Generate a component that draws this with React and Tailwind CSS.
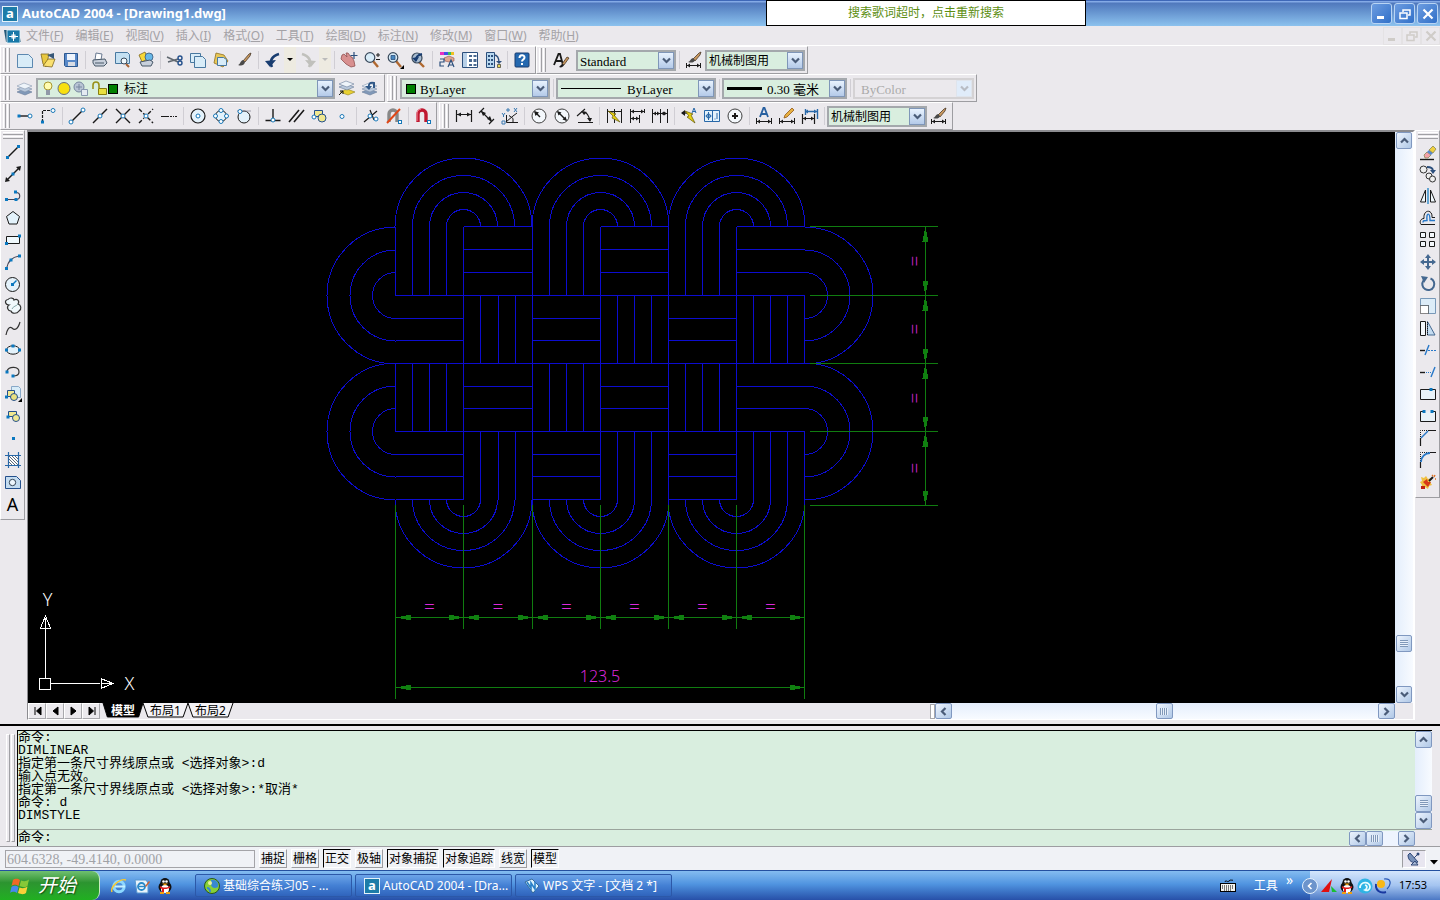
import clsx from 'clsx'

const INK = '#1a1a1a'
const NAVY = '#2c4f7c'
const DOT = '#0a78c0'
const PALE = '#c4e0f2'

const Node = ({ x, y }) => <circle cx={x} cy={y} r="2" fill="#fff" stroke="#1878b8" />
const Grip = ({ x, y }) => <rect x={x - 1.5} y={y - 1.5} width="3" height="3" fill={DOT} />
const Line = ({ d, c = INK, w = 1.4, ...rest }) => <path d={d} fill="none" stroke={c} strokeWidth={w} {...rest} />

const Magnet = () => (
    <>
        <Line d="M5 16V8a4 4 0 0 1 8 0v8" c="#c01830" w="3.4" />
        <Line d="M4 15V8a5 5 0 0 1 4-5" c="#f08898" w="1" />
        <rect x="14.5" y="14.5" width="3" height="3" fill="#fff" stroke="#1878b8" />
    </>
)

const Brush = () => (
    <>
        <path d="M9 11 15 4l2-1-1 3-5 6z" fill="#c89860" stroke="#3a2a1a" strokeWidth=".7" />
        <path d="M4 15c2 0 2-4 5-5l2 2c-1 4-4 4-7 3z" fill="#4a4a4a" />
    </>
)

const DimBrush = () => (
    <>
        <path d="M9 9 15 3l2-1-1 3-5 6z" fill="#c89860" stroke="#3a2a1a" strokeWidth=".7" />
        <path d="M4 12c2 0 2-3 5-4l2 2c-1 3-4 3-7 2z" fill="#4a4a4a" />
        <Line d="M2.5 13v5M16.5 13v5M3 15.500h13" w="1" />
        <path d="m3 15.5 3-2v4zM16 15.5l-3-2v4z" fill={INK} />
    </>
)

const Layers = () => (
    <>
        <path d="m2 14 7-3 8 3-7 3z" fill="#8098b8" stroke="#687c98" strokeWidth=".6" />
        <path d="m2 11 7-3 8 3-7 3z" fill="#b8c8dc" stroke="#8090a8" strokeWidth=".6" />
        <path d="m2 8 7-3 8 3-7 3z" fill="#eef4fa" stroke="#8898b0" strokeWidth=".6" />
    </>
)

const Lens = () => (
    <>
        <Line d="m11 11 5 6" c="#b06830" w="2.4" />
        <circle cx="8" cy="7.5" r="4.8" fill="#d8ecf8" stroke="#3a4a5c" strokeWidth="1.2" />
    </>
)

const ICONS = {
    new: <path d="M2.5 4.5h11l4 4v9h-15z" fill="#d8ecf8" stroke="#5c88b0" />,
    open: (
        <>
            <path d="M3 4h8l-3 13-3-3z" fill="#e8c840" stroke="#806820" strokeWidth=".8" />
            <path d="m5 16 5-7h7l-3 8z" fill="#fae070" stroke="#806820" strokeWidth=".8" />
            <path d="m9 5 7-2v6z" fill="#385878" />
        </>
    ),
    save: (
        <>
            <path d="M3.5 3.5h13v13h-12l-1-1z" fill="#5888c8" stroke="#2c5890" />
            <path d="M6 4h8v6H6z" fill="#eef4fc" />
            <path d="M7 12h7v4H7z" fill="#d8dce4" />
        </>
    ),
    print: (
        <>
            <path d="m6 3 6 1-1 6H5z" fill="#fff" stroke="#687890" />
            <path d="m3 10 12-1 2 4-3 3H5l-2-3z" fill="#c8d0dc" stroke="#485868" />
            <path d="M5 13h9" stroke="#485868" />
        </>
    ),
    preview: (
        <>
            <path d="M2.5 2.5h12l2 2v9h-14z" fill={PALE} stroke="#4878a0" />
            <Line d="m13 14 3 3" c="#a86030" w="2" />
            <circle cx="11" cy="11" r="3" fill="#f0f8fc" stroke="#3a4a5c" />
        </>
    ),
    publish: (
        <>
            <path d="m3 5 6-3 3 7-6 3z" fill="#f8d838" stroke="#806820" strokeWidth=".8" />
            <circle cx="13" cy="7" r="4" fill="#68b8e8" stroke="#385878" strokeWidth=".8" />
            <path d="m4 12 10-2 3 2-2 4H6z" fill="#c8d0dc" stroke="#485868" />
        </>
    ),
    cut: (
        <>
            <Line d="m2 7 11 5M3 12l10-3" c="#606870" w="1.6" />
            <circle cx="15" cy="8" r="2" fill="none" stroke="#24508c" strokeWidth="1.4" />
            <circle cx="15" cy="13" r="2" fill="none" stroke="#24508c" strokeWidth="1.4" />
        </>
    ),
    copy: (
        <>
            <path d="M2.5 3.5h10v9h-10z" fill="#d8ecf8" stroke="#4878a0" />
            <path d="M6.5 6.5h8l3 3v8h-11z" fill="#d8ecf8" stroke="#4878a0" />
        </>
    ),
    paste: (
        <>
            <path d="m5 3 8 2 4 6-5 6-9-4z" fill="#e8c858" stroke="#907020" strokeWidth=".8" />
            <path d="M6.5 7.5h6l3 2v6h-9z" fill="#d8ecf8" stroke="#4878a0" />
        </>
    ),
    match: <Brush />,
    undo: (
        <>
            <Line d="M9 17C6 11 9 6 16 4" c="#183c70" w="2.6" />
            <path d="m2 11 11-1-6 7z" fill="#183c70" />
        </>
    ),
    redo: (
        <>
            <Line d="M11 17C14 11 11 6 4 4" c="#c0c0bc" w="2.6" />
            <path d="m18 11-11-1 6 7z" fill="#c0c0bc" />
        </>
    ),
    pan: (
        <>
            <path d="m3 5 2-1 3 3-1-4 2 0 3 4 1 0 2 4 1 5-4 1-5-3-5-5z" fill="#d89090" stroke="#905050" strokeWidth=".8" />
            <Line d="M15 2v7M11.5 5.5h7" c={NAVY} w="1.2" />
        </>
    ),
    zoom: (
        <>
            <Lens />
            <Line d="M16 3v4M14 5h4M14 9.5h4" w="1" />
        </>
    ),
    zoomWindow: (
        <>
            <Lens />
            <path d="M6 5.500h4v4H6z" fill="#4888c0" stroke={NAVY} strokeWidth=".8" />
            <path d="M19 15v4h-4z" fill="#000" />
        </>
    ),
    zoomPrev: (
        <>
            <Line d="m10 11 6 6" c="#b06830" w="2.4" />
            <circle cx="9" cy="8" r="5" fill="#a8bcd0" stroke="#3a4a5c" strokeWidth="1.2" />
            <Line d="M8 11c-1-4 2-6 6-7" c="#183c70" w="2" />
            <path d="m4 8 7-1-3 5z" fill="#183c70" />
        </>
    ),
    props: (
        <>
            <path d="M3 2h4v3H3z" fill="#e830c0" />
            <path d="M7 2h4v3H7z" fill="#4050e8" />
            <path d="M11 2h3v3h-3z" fill="#30c060" />
            <path d="M14 2h3v3h-3z" fill="#f0c020" />
            <path d="m7 8 5-2 5 2v3l-5 1-4-1z" fill="#e0a890" stroke="#905050" strokeWidth=".6" />
            <Line d="M3 9h4v3H3v4h4M11 17l3-7 3 7M12 15h4" c={NAVY} w="1.2" />
        </>
    ),
    design: (
        <>
            <path d="M2.5 2.5h15v15h-15z" fill="#fff" stroke={NAVY} />
            <path d="M3 3h4v14H3z" fill="#b8d0e8" />
            <path d="M9 5h3v2H9zM13.5 5h3v2h-3zM9 9h3v3H9zM13.5 9h3v3h-3zM9 14h3v2H9zM13.5 14h3v2h-3z" fill="#4a6890" />
        </>
    ),
    palettes: (
        <>
            <path d="M3.5 2.5h8v15h-8z" fill="#b8d8f0" stroke={NAVY} />
            <path d="M5 5h2v2H5zM8 5h2v2H8zM5 9h2v2H5zM8 9h2v2H8zM5 13h2v2H5zM8 13h2v2H8z" fill={NAVY} />
            <Line d="M11 5c4 0 5 3 5 8" c={NAVY} />
            <path d="m13 11 6 0-3 3z" fill={NAVY} />
            <path d="M14.5 14.5h3v3h-3z" fill="#e8d858" stroke={INK} strokeWidth=".6" />
        </>
    ),
    help: (
        <>
            <rect x="3" y="3" width="14" height="14" rx="1" fill="#2468b0" stroke="#183c70" />
            <Line d="M7.5 8c0-3.500 5-3.500 5-.5 0 2-2.500 2-2.500 4M10 13v2" c="#fff" w="2" />
        </>
    ),
    textStyle: (
        <>
            <Line d="M3 15 7.5 4H9l3 11M5 11h6" w="1.8" />
            <path d="m11 14 5-7 2 1-5 7z" fill="#c89860" stroke="#3a2a1a" strokeWidth=".7" />
            <path d="m8 17 3-3 2 1c-1 2-3 3-5 2z" fill={INK} />
        </>
    ),
    dimStyle: <DimBrush />,
    layers: <Layers />,
    layerCurrent: (
        <>
            <path d="m3 14 7-3 8 3-7 3z" fill="#e8d030" stroke="#908020" strokeWidth=".6" />
            <path d="m2 9 7-3 8 3-7 3z" fill="#b8c8dc" stroke="#687c98" strokeWidth=".6" />
            <path d="m2 6 7-3 8 3-7 3z" fill="#eef4fa" stroke="#687c98" strokeWidth=".6" />
            <Line d="m2 17 4-4M3 13h3v3" w="1" />
        </>
    ),
    layerPrev: (
        <>
            <Layers />
            <Line d="M9 10c-1-4 1-6 5-5v5" c="#305888" w="2" />
            <path d="m5 8 7 0-3 4z" fill="#305888" />
        </>
    ),
    track: (
        <>
            <Line d="M4 10h9" />
            <Grip x={4} y={10} />
            <Node x={15} y={10} />
        </>
    ),
    snapFrom: (
        <>
            <Line d="M4.5 16V4.500H13" w="1.2" strokeDasharray="3 1" />
            <Grip x={4.5} y={16} />
            <Node x={15} y={4.5} />
        </>
    ),
    endpoint: (
        <>
            <Line d="M4 16 16 4" />
            <Node x={4} y={16} />
            <Node x={16} y={4} />
        </>
    ),
    midpoint: (
        <>
            <Line d="M3 17 17 3" />
            <Node x={10} y={10} />
        </>
    ),
    intersect: (
        <>
            <Line d="M3 3l14 14M3 17 17 3" />
            <Node x={10} y={10} />
        </>
    ),
    apparent: (
        <>
            <Line d="M3 3l14 14M3 17l5-5M12 8l5-5" strokeDasharray="4 2" />
            <Node x={10} y={10} />
        </>
    ),
    extension: <Line d="M2 10.5h8M11 10.5h2M14 10.5h1M16 10.5h2" w="1.2" />,
    center: (
        <>
            <circle cx="10" cy="10" r="7" fill="#e4f2fb" stroke={INK} strokeWidth="1.2" />
            <Node x={10} y={10} />
        </>
    ),
    quadrant: (
        <>
            <circle cx="10" cy="10" r="5.5" fill="#e4f2fb" stroke={INK} />
            <Node x={10} y={4.5} />
            <Node x={4.5} y={10} />
            <Node x={15.5} y={10} />
            <Node x={10} y={15.5} />
        </>
    ),
    tangent: (
        <>
            <circle cx="10" cy="11" r="6" fill="#e4f2fb" stroke={INK} />
            <Line d="M3 5h14" w=".8" c="#889" />
            <Node x={6} y={5.5} />
        </>
    ),
    perpendicular: (
        <>
            <Line d="M10 3v11M2.5 14.5h15" />
            <Node x={10} y={14} />
        </>
    ),
    parallel: <Line d="M3 16 13 4M8 16 18 4" w="1.6" />,
    insert: (
        <>
            <path d="M5.5 4.5h8v6h-8z" fill="#f0e890" stroke="#24508c" />
            <circle cx="13" cy="12" r="4" fill="#f0e890" stroke="#24508c" />
            <Node x={5} y={11} />
        </>
    ),
    node: <Node x={10} y={10.5} />,
    nearest: (
        <>
            <Line d="M3 16 16 5M9 4l4 10" w="1.2" />
            <Node x={9} y={10} />
            <Node x={15} y={13} />
        </>
    ),
    none: (
        <>
            <Line d="M5 16V8a4 4 0 0 1 8 0v8" c="#888" w="3.4" />
            <rect x="14.5" y="14.5" width="3" height="3" fill="#fff" stroke="#1878b8" />
            <Line d="M3 17 16 3" c="#e04818" w="2" />
        </>
    ),
    osnap: <Magnet />,
    dimLinear: (
        <>
            <Line d="M2.5 4v12M17.5 4v12M3 8.5h14" w="1.2" />
            <path d="m3 8.5 4-2v4zM17 8.5l-4-2v4z" fill={INK} />
        </>
    ),
    dimAligned: (
        <>
            <Line d="m2 7 5-5M12 18l5-5M4 5l10 10" w="1.2" />
            <path d="m4 5 5 2-3 3zM15 15l-5-2 3-3z" fill={INK} />
        </>
    ),
    dimOrdinate: (
        <>
            <Line d="M6.500 9v7.500H18M6 16l7-6M9 9.500l4 3v4M13 10l4-3" w="1" />
            <Line d="M7 3h2v2H7zM14 2l3 4M17 2l-3 4M2 7l1.500 2L5 7M3.500 9v2M2 15h3v3H2z" c="#3878b0" w="1" />
        </>
    ),
    dimRadius: (
        <>
            <circle cx="10" cy="10" r="7" fill="#f4f8fc" stroke="#404040" />
            <Line d="m6 6 5 5" />
            <path d="m5 5 5 1.500L6.500 10z" fill={INK} />
        </>
    ),
    dimDiameter: (
        <>
            <circle cx="10" cy="10" r="7" fill="#f4f8fc" stroke="#404040" />
            <Line d="m6 6 8 8" />
            <path d="m5 5 4.500 1.500-3 3zM15 15l-4.500-1.500 3-3z" fill={INK} />
        </>
    ),
    dimAngular: (
        <>
            <Line d="m2 10 8-7M3 16.500h15M8 6c4 0 6 4 7 9" w="1.1" />
            <path d="m6 5 6 1-3 3zM15 16l-3-4 5 0z" fill={INK} />
        </>
    ),
    dimQuick: (
        <>
            <Line d="M3.5 3v14M10.5 3v14M17.5 3v14M3 5.5h14" w="1" />
            <path d="m4 5 8 3-2 1 6 7-8-4 1-2z" fill="#e8d010" stroke="#605808" strokeWidth=".7" />
        </>
    ),
    dimBaseline: (
        <>
            <Line d="M3.5 3v14M17.5 3v4M12.5 9v8M3 5.5h14M3 12.5h10" w="1" />
            <path d="m4 5.5 3-2v4zM17 5.5l-3-2v4zM4 12.5l3-2v4zM12 12.5l-3-2v4z" fill={INK} />
        </>
    ),
    dimContinue: (
        <>
            <Line d="M2.5 3v14M10.5 3v14M17.5 3v14M3 7.5h14" w="1" />
            <path d="m3 7.5 3-2v4zM17 7.5l-3-2v4zM10 7.5l-3-2v4zM11 7.5l3-2v4z" fill={INK} />
        </>
    ),
    leader: (
        <>
            <Line d="M3 7h6" />
            <path d="m2 7 4-3v6z" fill={INK} />
            <path d="m6 5 8 3-2 1 4 8-8-6 2-1z" fill="#e8d010" stroke="#605808" strokeWidth=".7" />
            <Line d="m13 7 2-5 2 5M14 5.5h3" c="#2868a8" w="1" />
        </>
    ),
    tolerance: (
        <>
            <path d="M2.5 4.5h15v11h-15zM10.5 5v10" fill="#e4f2fb" stroke="#2868a8" />
            <circle cx="6.5" cy="10" r="2" fill="none" stroke="#2868a8" />
            <Line d="M6.5 6v8M3.5 10h6M12.500 13h1M15 7v6" c="#2868a8" w="1" />
        </>
    ),
    centerMark: (
        <>
            <circle cx="10" cy="10" r="7" fill="#f4f8fc" stroke="#404040" />
            <Line d="M10 7v6M7 10h6" w="2" />
        </>
    ),
    dimEdit: (
        <>
            <Line d="m6 11 3.500-9h1L14 11M7 8h6" c="#2860a0" w="1.8" />
            <Line d="M2.5 12v6M17.5 12v6M3 15.5h14" w="1" />
            <path d="m3 15.5 3-2v4zM17 15.5l-3-2v4z" fill={INK} />
        </>
    ),
    dimTextEdit: (
        <>
            <path d="m7 12 1-3 7-7 2 2-7 7z" fill="#e8b040" stroke="#905818" strokeWidth=".8" />
            <Line d="M2.5 12v6M17.5 12v6M3 15.5h14" w="1" />
            <path d="m3 15.5 3-2v4zM17 15.5l-3-2v4z" fill={INK} />
        </>
    ),
    dimUpdate: (
        <>
            <Line d="M5.5 3v6M17.5 3v10M5 5.5h13" c="#2868a8" />
            <path d="m5 5.5 3-2v4zM17 5.5l-3-2v4z" fill="#2868a8" />
            <Line d="M2.5 8v10M14.5 8v10M3 12.5h12" w="1.2" />
            <path d="m3 12.5 3-2v4zM14 12.5l-3-2v4z" fill={INK} />
        </>
    ),
    line: (
        <>
            <Line d="M5 15 15 5" />
            <Grip x={4.5} y={15.5} />
            <Grip x={15.5} y={4.5} />
        </>
    ),
    xline: (
        <>
            <Line d="M4 16 16 4" />
            <path d="m2 18 1-5 4 4zM18 2l-5 1 4 4z" fill={INK} />
            <Grip x={10} y={10} />
        </>
    ),
    pline: (
        <>
            <Line d="M4 13.5h9c5 0 5-7 0-7" w="1.1" c="#445" />
            <Grip x={3.5} y={13.5} />
            <Grip x={13} y={13.5} />
            <Grip x={12.5} y={6} />
        </>
    ),
    polygon: <path d="m10 3.500 6.500 5-2.500 7.500H6L3.500 8.500z" fill="#e4f2fb" stroke={INK} />,
    rect: (
        <>
            <path d="M3.5 6.5h13v7h-13z" fill="#f0f8fc" stroke={INK} />
            <Grip x={3.5} y={13.5} />
            <Grip x={16.5} y={6} />
        </>
    ),
    arc: (
        <>
            <Line d="M3.5 16.5C5 9 9 5 16 4" c="#445" w="1.2" />
            <Grip x={3.5} y={16.5} />
            <Grip x={8} y={8} />
            <Grip x={16.5} y={4} />
        </>
    ),
    circle: (
        <>
            <circle cx="9.5" cy="10.5" r="7" fill="#e4f2fb" stroke={INK} />
            <Line d="m9.5 10.5 4-4" c={DOT} />
            <Grip x={9.5} y={10.5} />
        </>
    ),
    cloud: (
        <>
            <path
                d="M6 9C2 9 1 4 5 3.500 7 1 11 2 11 4c3-2 6 1 4 4 3 1 4 5 1 7-2 3-7 3-8 0-3 0-5-4-2-6z"
                fill="#f0f8fc"
                stroke="#333"
                strokeWidth="1.2"
            />
            <Line d="M9 13c1-3 5-3 6-5" c="#8aa" w="1" />
        </>
    ),
    spline: <Line d="M3 17c1-5 3-9 6-7 3 3 6 1 8-6" c="#333" w="1.2" />,
    ellipse: (
        <>
            <ellipse cx="10" cy="10" rx="6.5" ry="4.2" fill="#e4f2fb" stroke={INK} />
            <Grip x={3.5} y={10} />
            <Grip x={16.5} y={10} />
            <Grip x={10} y={6} />
        </>
    ),
    ellipseArc: (
        <>
            <Line d="M4 9c2-5 12-5 12 1 0 3-3 4-6 4" c="#333" w="1.2" />
            <Grip x={4} y={10} />
            <Grip x={10} y={14} />
        </>
    ),
    insertBlock: (
        <>
            <path d="M8.5 2.5h7l2 2v9h-9z" fill="#d8ecf8" stroke="#88a8c8" />
            <path d="M4.5 6.5h7v6h-7z" fill="#f0e890" stroke="#24508c" />
            <circle cx="11" cy="13" r="3.5" fill="#e8e080" stroke="#24508c" />
            <Grip x={3.5} y={13} />
            <path d="M19 14v4h-4z" fill="#000" />
        </>
    ),
    makeBlock: (
        <>
            <path d="M5.5 5.5h8v5h-8z" fill="#f0e890" stroke="#24508c" />
            <circle cx="13" cy="12" r="3.5" fill="#f0e890" stroke="#24508c" />
            <Grip x={5} y={11} />
        </>
    ),
    point: <Grip x={10.5} y={10.5} />,
    hatch: (
        <>
            <path d="M5.5 5.5h10v10h-10z" fill="#fff" />
            <Line d="m6 6 9 9M6 9l6 6M6 12l3 3M9 6l6 6M12 6l3 3" c="#345" w=".8" />
            <Line d="M2 5.5h16M2 15.5h16M5.5 2v16M15.5 2v16" c="#2868a8" w="1.2" />
        </>
    ),
    region: (
        <>
            <path d="M2.5 4.5h11l4 4v8h-15z" fill="#c4dcf0" stroke="#24508c" />
            <circle cx="9.5" cy="10.5" r="3.2" fill="#eef6fc" stroke="#345" />
        </>
    ),
    erase: (
        <>
            <Line d="M2 17.5h14" />
            <path d="m6 13 3-3 4 3-3 3H7z" fill="#f4a0a8" stroke="#885" strokeWidth=".8" />
            <path d="m9 10 2-2 4 3-2 2z" fill="#5888d0" />
            <path d="m11 8 4-4 3 3-3 4z" fill="#f0d040" stroke="#885" strokeWidth=".8" />
        </>
    ),
    copyObj: (
        <>
            <circle cx="5.500" cy="5.5" r="3.500" fill="#eee" stroke="#333" />
            <circle cx="11" cy="12" r="3" fill="#eee" stroke="#333" />
            <circle cx="14.5" cy="15" r="3" fill="#eee" stroke="#333" />
            <Line d="M9 3c4 0 6 1 6 4" c={NAVY} w="1.8" />
            <path d="m12 6 6 0-3 4z" fill={NAVY} />
        </>
    ),
    mirror: (
        <>
            <path d="M7.5 4v12h-5zM12.5 4v12h5z" fill="#f0f8fc" stroke={INK} />
            <Line d="M10 2v16" c={DOT} w="1.2" />
        </>
    ),
    offset: (
        <>
            <path d="M3 16.5c-2-3 0-6 3-6C5 1 15 1 14 9.500h3" fill="none" stroke={INK} />
            <path d="M5 14.500c0-2 1-2 4-2C8 4 12 4 12 12.500h5" fill="none" stroke="#2878c8" strokeWidth="1.4" />
            <path d="M3 16.5h14" stroke={INK} />
        </>
    ),
    array: <path d="M2.5 2.5h5v5h-5zM11.5 2.5h5v5h-5zM2.5 11.5h5v5h-5zM11.5 11.5h5v5h-5z" fill="#f4f8fc" stroke={INK} />,
    move: (
        <>
            <Line d="M10 4v12M4 10h12" c="#456890" w="2" />
            <path d="m10 2 3 4H7zM10 18l3-4H7zM2 10l4-3v6zM18 10l-4-3v6z" fill="#456890" />
        </>
    ),
    rotate: (
        <>
            <Line d="M5.5 6.5a6 6 0 1 0 7-2" c="#456890" w="2" />
            <path d="m3 2 7 1-4 6z" fill="#456890" />
        </>
    ),
    scale: (
        <>
            <path d="M2.5 2.5h15v15h-7v-8h-8z" fill="#dcecf8" stroke="#7898b8" />
            <path d="M2.5 9.5h8v8h-8z" fill="#fff" stroke={INK} strokeDasharray="1 1" />
        </>
    ),
    stretch: (
        <>
            <path d="M9.500 3.500 17 17H9.500z" fill="#c4dcf0" stroke="#456890" />
            <path d="M2.5 3.5h5v14h-5z" fill="#f4f8fc" stroke={INK} />
            <Line d="M9.5 4v13" strokeDasharray="1 1" w="1" />
        </>
    ),
    trim: (
        <>
            <Line d="M7 15l4-10" c="#2878c8" />
            <Line d="M2 10.5h5" />
            <Line d="M10 10.5h8" w="1" strokeDasharray="2 1" c="#2878c8" />
        </>
    ),
    extend: (
        <>
            <Line d="M2 10.5h5" />
            <Line d="M8 10.5h5" w="1" strokeDasharray="1 1" c="#2878c8" />
            <Line d="m13 15 4-10" c="#2878c8" />
        </>
    ),
    breakPoint: (
        <>
            <path d="M2.5 5.5h15v10h-15z" fill="#e8f2f8" stroke={INK} />
            <Grip x={13} y={5.5} />
        </>
    ),
    breakTwo: (
        <>
            <path d="M6 5.5H2.500v10h15v-10H14" fill="#e8f2f8" stroke={INK} />
            <Grip x={6} y={5.5} />
            <Grip x={14} y={5.5} />
        </>
    ),
    chamfer: (
        <>
            <Line d="M2.5 11V2.500H11" strokeDasharray="1 1" w="1" />
            <Line d="m3 10 7-7" c="#2878c8" />
            <Line d="M2.5 10v8M10 2.5h8" w="1.2" />
        </>
    ),
    fillet: (
        <>
            <Line d="M2.5 11V2.500H11" strokeDasharray="1 1" w="1" />
            <Line d="M3 12c0-5 4-9 9-9" c="#2878c8" w="1.8" />
            <Line d="M2.5 12v6M12 2.5h6" w="1.2" />
        </>
    ),
    explode: (
        <>
            <path d="m3 5 3 1 2-2 2 3 4-1-2 4 2 3-3 1-1 3-3-2-4 2 1-4-2-3 2-1z" fill="#f0c040" />
            <path d="m5 10 4-3 1 3 3 0-3 5z" fill="#d83818" />
            <path d="M3 14h4v3H3z" fill="#c02010" />
            <Line d="m11 9 4-4" w="2" />
            <Line d="m14 3 1 1M17 3l-1 2M17 7h1" c="#e07020" />
        </>
    ),
}

function Icon({ name }) {
    if (name === 'mtext') return <span className="text-[18px] leading-[22px]">A</span>
    return (
        <svg viewBox="0 0 20 20" className="h-5 w-5 shrink-0" aria-hidden="true">
            {ICONS[name]}
        </svg>
    )
}

const Tool = ({ name, className }) => (
    <button className={clsx('flex shrink-0 items-center justify-center', className ?? 'w-[23px]')} aria-label={name}>
        <Icon name={name} />
    </button>
)

// "|" in a list of tools stands for a separator, "v" for a flyout arrow ("V" when disabled)
const Tools = ({ names }) =>
    names.split(' ').map((n, i) => {
        if (n === '|') return <Sep key={i} />
        if (n === 'v' || n === 'V')
            return (
                <button key={i} className="flex w-3 items-center justify-center bg-[#f0ecd8]/60" aria-label="more">
                    <svg viewBox="0 0 6 4" className="h-1 w-1.5">
                        <path d="M0 0h6L3 3z" fill={n === 'v' ? '#000' : '#bbb'} />
                    </svg>
                </button>
            )
        return <Tool key={i} name={n} />
    })

const Sep = () => (
    <span className="flex w-1.5 shrink-0 justify-center py-1">
        <i className="border-l border-[#d0ced4]" />
    </span>
)

function Bar({ children }) {
    return (
        <div className="flex h-7 items-stretch border border-t-white border-r-[#9d9da1] border-b-[#9d9da1] border-l-white pr-[2px]">
            <div className="flex w-3 shrink-0 gap-px py-px pl-[2px]">
                <i className="w-[3px] border-r border-l border-r-[#a0a0a4] border-l-white" />
                <i className="w-[3px] border-r border-l border-r-[#a0a0a4] border-l-white" />
            </div>
            {children}
        </div>
    )
}

const Chevron = ({ dir = 'down', faded }) => {
    const turn = { down: 'rotate-0', up: 'rotate-180', left: 'rotate-90', right: '-rotate-90' }[dir]
    return (
        <svg viewBox="0 0 9 9" className={clsx('h-[9px] w-[9px]', turn)}>
            <path d="m1 2.500 3.500 3.500L8 2.500" fill="none" stroke={faded ? '#b8bcc4' : '#4a5c78'} strokeWidth="2.2" />
        </svg>
    )
}

function Combo({ label, value, width, children, faded, serif }) {
    return (
        <div
            className={clsx(
                'my-[3px] flex h-[21px] shrink-0 items-center border-2',
                width,
                faded ? 'border-[#d4d2d4] bg-[#ebe9ed]' : 'border-[#a4a8ac] bg-[#d9eedf]',
            )}
        >
            {children}
            <select
                aria-label={label}
                disabled={faded}
                className={clsx(
                    'h-full min-w-0 flex-1 appearance-none outline-none',
                    serif ? "font-['Liberation_Serif','Noto_Sans_CJK_SC',serif] text-[13px]" : 'text-xs',
                    faded ? 'pl-1.5 text-[#aaa]' : 'pl-[2px] text-black',
                )}
            >
                <option>{value}</option>
            </select>
            <span
                className={clsx(
                    'pointer-events-none flex h-[17px] w-4 shrink-0 items-center justify-center border',
                    faded ? 'border-[#dfe4ec] bg-[#e0ecfa]' : 'border-[#7f96b8] bg-linear-to-b from-[#e8f2fe] to-[#b4cae8]',
                )}
            >
                <Chevron faded={faded} />
            </span>
        </div>
    )
}

const ScrollButton = ({ dir, className }) => (
    <button
        aria-label={dir}
        className={clsx(
            'flex shrink-0 items-center justify-center rounded-[2px] border border-[#8098c0] bg-linear-to-br from-[#edf4fe] to-[#b0c8e6]',
            className,
        )}
    >
        {dir === 'thumb-y' && <i className="h-[7px] w-2 bg-[repeating-linear-gradient(#8098b8_0_1px,#e8f0fa_1px_2px)]" />}
        {dir === 'thumb-x' && <i className="h-[7px] w-2 bg-[repeating-linear-gradient(90deg,#8098b8_0_1px,#e8f0fa_1px_2px)]" />}
        {!dir.startsWith('thumb') && <Chevron dir={dir} />}
    </button>
)

const AppLogo = () => (
    <span className="flex h-4 w-4 shrink-0 items-center justify-center border border-[#e4f2fa] bg-[#1c7ca8] pb-[2px] text-[13px] leading-[14px] font-bold text-white">
        a
    </span>
)

const WinGlyph = ({ kind }) => (
    <svg viewBox="0 0 12 12" className="h-3 w-3" fill="none" stroke="currentColor">
        {kind === 'minimize' && <path d="M1 9.5h7" strokeWidth="3" />}
        {kind === 'restore' && (
            <>
                <path d="M4 4V2h7v5H9" strokeWidth="1.5" />
                <path d="M1 5h7v5.500H1z" strokeWidth="1.5" />
            </>
        )}
        {kind === 'close' && <path d="m1.500 1.500 9 9M10.500 1.500l-9 9" strokeWidth="2.2" />}
    </svg>
)

const WINDOW_KEYS = ['minimize', 'restore', 'close']

function TitleBar() {
    return (
        <header className="relative flex h-[26px] shrink-0 items-center border-t border-[#3f68b8] bg-linear-to-b from-[#84aae6] from-4% via-[#5078bc] via-8% to-[#8cc2ee] px-0.5">
            <AppLogo />
            <h1 className="flex-1 pl-1 text-[13px] font-bold text-white">AutoCAD 2004 - [Drawing1.dwg]</h1>
            <div className="flex gap-[2px]">
                {WINDOW_KEYS.map((k) => (
                    <button
                        key={k}
                        aria-label={k}
                        className="flex h-[21px] w-[21px] items-center justify-center rounded-[3px] border border-[#b8d4f4] bg-linear-to-br from-[#6c9ce0] to-[#3070c8] text-white"
                    >
                        <WinGlyph kind={k} />
                    </button>
                ))}
            </div>
            <button className="absolute -top-px right-[354px] h-[26px] w-80 border border-black bg-white text-center text-xs text-[#5c8e10]">
                搜索歌词超时，点击重新搜索
            </button>
        </header>
    )
}

const MENUS = [
    ['文件', 'F'],
    ['编辑', 'E'],
    ['视图', 'V'],
    ['插入', 'I'],
    ['格式', 'O'],
    ['工具', 'T'],
    ['绘图', 'D'],
    ['标注', 'N'],
    ['修改', 'M'],
    ['窗口', 'W'],
    ['帮助', 'H'],
]

function MenuBar() {
    return (
        <nav className="flex h-5 shrink-0 items-center border-b border-white pl-1 text-xs text-[#a4a2a6]">
            <svg viewBox="0 0 18 16" className="mr-1 h-4 w-[18px]" aria-hidden="true">
                <path d="M0 2h14l3 12H2z" fill="#245878" />
                <rect x="3" y="2" width="13" height="13" fill="#1878a8" stroke="#e8f4fa" strokeWidth=".8" />
                <path d="M9.500 4v9M5 8.500h9" stroke="#fff" />
                <rect x="8" y="7" width="3" height="3" fill="none" stroke="#fff" />
            </svg>
            <div className="flex gap-3">
                {MENUS.map(([name, key]) => (
                    <button key={key} className="leading-4 whitespace-nowrap">
                        {name}(<u>{key}</u>)
                    </button>
                ))}
            </div>
            <div className="ml-auto flex">
                {WINDOW_KEYS.map((k) => (
                    <button
                        key={k}
                        aria-label={k}
                        className="flex h-[18px] w-[19px] items-center justify-center border border-[#e4e2e4] text-[#cfccc8]"
                    >
                        <WinGlyph kind={k} />
                    </button>
                ))}
            </div>
        </nav>
    )
}

const Swatch = () => <i className="h-[10px] w-[10px] shrink-0 border border-black bg-[#008000]" />

function LayerFlags() {
    return (
        <svg viewBox="0 0 66 17" className="ml-1 h-[17px] w-[66px] shrink-0" aria-hidden="true">
            <circle cx="6" cy="6" r="4" fill="#fffcb0" stroke="#a89830" />
            <path d="M4 10h4v5H4z" fill="#9098a8" />
            <circle cx="22" cy="8.5" r="6" fill="#f8e010" stroke="#687080" />
            <circle cx="37" cy="7" r="5" fill="#b8c4d4" stroke="#7888a0" />
            <path d="M34 7h6M37 4v6" stroke="#7888a0" />
            <path d="M39.5 9.5h6v6h-6z" fill="#e4eaf2" stroke="#8898b0" />
            <path d="M51 9V5c0-4 6-4 6 0v3" fill="none" stroke="#989018" strokeWidth="1.6" />
            <path d="M56.5 8.5h8v6h-8z" fill="#e8e040" stroke="#888010" />
        </svg>
    )
}

function Toolbars() {
    return (
        <div className="shrink-0">
            <div className="flex">
                <Bar>
                    <Tools names="new open save | print preview publish | cut copy paste match | undo v redo V | pan zoom zoomWindow zoomPrev | props design palettes | help" />
                </Bar>
                <Bar>
                    <Tool name="textStyle" />
                    <span className="w-1" />
                    <Combo label="文字样式" value="Standard" width="w-[100px]" serif />
                    <Sep />
                    <Tool name="dimStyle" />
                    <Combo label="标注样式" value="机械制图用" width="w-[100px]" />
                </Bar>
            </div>
            <div className="flex gap-[2px]">
                <Bar>
                    <Tool name="layers" />
                    <Combo label="图层" value="标注" width="w-[299px]">
                        <LayerFlags />
                        <Swatch />
                        <i className="w-1" />
                    </Combo>
                    <Tools names="layerCurrent layerPrev" />
                    <i className="w-px" />
                </Bar>
                <Bar>
                    <Combo label="颜色" value="ByLayer" width="w-[150px]" serif>
                        <i className="w-1" />
                        <Swatch />
                        <i className="w-0.5" />
                    </Combo>
                    <Sep />
                    <Combo label="线型" value="ByLayer" width="w-[160px]" serif>
                        <i className="mr-1 ml-[3px] w-[60px] shrink-0 border-t border-black" />
                    </Combo>
                    <Sep />
                    <Combo label="线宽" value="0.30 毫米" width="w-[125px]" serif>
                        <i className="mx-[3px] w-[35px] shrink-0 border-t-3 border-black" />
                    </Combo>
                    <Sep />
                    <Combo label="打印样式" value="ByColor" width="w-[121px]" serif faded />
                </Bar>
            </div>
            <div className="flex gap-[2px]">
                <Bar>
                    <Tools names="track snapFrom | endpoint midpoint intersect apparent extension | center quadrant tangent | perpendicular parallel insert node | nearest none | osnap" />
                </Bar>
                <Bar>
                    <Tools names="dimLinear dimAligned dimOrdinate | dimRadius dimDiameter dimAngular | dimQuick dimBaseline dimContinue | leader tolerance centerMark | dimEdit dimTextEdit dimUpdate |" />
                    <Combo label="当前标注样式" value="机械制图用" width="w-[100px]" />
                    <Tool name="dimStyle" />
                </Bar>
            </div>
        </div>
    )
}

function SideBar({ names }) {
    return (
        <div className="w-[25px] shrink-0">
            <div className="flex flex-col items-center border border-t-white border-r-[#9d9da1] border-b-[#9d9da1] border-l-white pb-1">
                <div className="flex w-5 flex-col gap-px pt-px pb-[2px]">
                    <i className="h-[3px] border-t border-b border-t-white border-b-[#a0a0a4]" />
                    <i className="h-[3px] border-t border-b border-t-white border-b-[#a0a0a4]" />
                </div>
                {names.split(' ').map((n) => (
                    <Tool key={n} name={n} className="h-[22px] w-[22px]" />
                ))}
            </div>
        </div>
    )
}

const XS = [395.5, 463.5, 532.5, 600.5, 668.5, 736.5, 804.5]
const YS = [226.5, 295.5, 363.5, 431.5, 499.5]
const R4 = [17, 34, 51, 68.5]
const R3 = [23, 45.5, 68.5]

// Woven knot: even cells carry the vertical strand on top, odd cells the horizontal one
function knotPath() {
    let d = ''
    for (let r = 0; r < 4; r++) {
        for (let c = 0; c < 6; c++) {
            const [x0, x1, y0, y1] = [XS[c], XS[c + 1], YS[r], YS[r + 1]]
            if ((r + c) % 2 === 0) {
                for (let k = 0; k <= 4; k++) d += `M${x0 + Math.round(((x1 - x0) * k) / 4)} ${y0}V${y1}`
            } else {
                for (let k = 0; k <= 3; k++) d += `M${x0} ${y0 + Math.round(((y1 - y0) * k) / 3)}H${x1}`
            }
        }
    }
    for (const x of [XS[1], XS[3], XS[5]]) {
        for (const r of R4) {
            d += `M${x - r} ${YS[0]}a${r} ${r} 0 0 1 ${2 * r} 0`
            d += `M${x - r} ${YS[4]}a${r} ${r} 0 0 0 ${2 * r} 0`
        }
    }
    for (const y of [YS[1], YS[3]]) {
        for (const r of R3) {
            d += `M${XS[0]} ${y - r}a${r} ${r} 0 0 0 0 ${2 * r}`
            d += `M${XS[6]} ${y - r}a${r} ${r} 0 0 1 0 ${2 * r}`
        }
    }
    // edges shared by the rows, drawn through both kinds of cell
    for (const y of YS.slice(1, 4)) d += `M${XS[0]} ${y}H${XS[6]}`
    return d
}

const DIM_YS = [226.5, 295.5, 363.5, 431.5, 505.5]

function Dimensions() {
    const ends = XS.slice(1).map((x, i) => [XS[i], x])
    const rows = DIM_YS.slice(1).map((y, i) => [DIM_YS[i], y])
    const hArrows = (x0, x1, y) => `M${x0} ${y}l15-3v6zM${x1} ${y}l-15-3v6z`
    return (
        <g shapeRendering="crispEdges" className="font-['Noto_Sans',sans-serif]">
            <g stroke="#107c10">
                {XS.map((x, i) => (
                    <path key={x} d={`M${x} 505V${i === 0 || i === 6 ? 699 : 629}`} />
                ))}
                <path d="M395 617.5H804M395 687.5H804M925.5 226V506" />
                {DIM_YS.map((y) => (
                    <path key={y} d={`M810 ${y}H938`} />
                ))}
            </g>
            <g fill="#108010">
                {ends.map(([a, b]) => (
                    <path key={a} d={hArrows(a, b, 617.5)} />
                ))}
                <path d={hArrows(XS[0], XS[6], 687.5)} />
                {rows.map(([a, b]) => (
                    <path key={a} d={`M925.5 ${a}l-3 15h6zM925.5 ${b}l-3-15h6z`} />
                ))}
            </g>
            <g className="fill-[#dc28dc]" textAnchor="middle">
                {ends.map(([a, b]) => (
                    <text key={a} x={(a + b) / 2} y="613" className="text-[19px] font-light">
                        =
                    </text>
                ))}
                {[261, 329, 398, 468].map((y) => (
                    <text key={y} transform={`translate(921 ${y}) rotate(-90)`} className="text-[19px] font-light">
                        =
                    </text>
                ))}
                <text x="600" y="682" className="text-base font-light">
                    123.5
                </text>
            </g>
        </g>
    )
}

function Canvas() {
    return (
        <div className="relative min-w-0 flex-1 overflow-hidden bg-black">
            <svg className="absolute inset-0 h-full w-full" role="img" aria-label="Drawing1.dwg">
                <g transform="translate(-28 -132)">
                    <path d={knotPath()} fill="none" stroke="#0c0cd0" shapeRendering="crispEdges" />
                    <Dimensions />
                    <g fill="none" stroke="#fff" shapeRendering="crispEdges">
                        <path d="M39.5 678.5h11v11h-11zM45.5 678V628M50 683.5h50" />
                        <path d="M45.5 616l-5 12h10zM45.5 618v10M113 683.5l-12-5v10zM101 683.5h11" />
                    </g>
                    <g className="fill-white font-['Noto_Sans',sans-serif] text-[18px] font-light" textAnchor="middle">
                        <text x="47.5" y="606">
                            Y
                        </text>
                        <text x="129.5" y="690">
                            X
                        </text>
                    </g>
                </g>
            </svg>
        </div>
    )
}

function SheetTabs() {
    const nav = ['M3 1v8M9 1v8L4.500 5z', 'M8 1v8L3 5z', 'M3 1v8l5-4z', 'M9 1v8M3 1v8l4.500-4z']
    return (
        <div className="flex shrink-0">
            {nav.map((d) => (
                <button key={d} aria-label="tab" className="flex h-4 w-[18px] items-center justify-center border border-white border-r-[#a8a8ac] border-b-[#a8a8ac]">
                    <svg viewBox="0 0 11 10" className="h-[10px] w-[11px]">
                        <path d={d} stroke="#000" />
                    </svg>
                </button>
            ))}
            <div className="flex pl-[3px] text-xs">
                {['模型', '布局1', '布局2'].map((t, i) => (
                    <button key={t} className={clsx('relative h-4 leading-[14px]', i === 0 ? 'w-10 font-bold text-white' : 'w-[45px]')}>
                        <svg viewBox="0 0 46 16" preserveAspectRatio="none" className="absolute inset-0 h-full w-full overflow-visible">
                            <path d="M0 0l5 14H41L46 0" fill={i === 0 ? '#000' : '#f4f3f6'} stroke="#000" />
                        </svg>
                        <span className="relative">{t}</span>
                    </button>
                ))}
            </div>
        </div>
    )
}

function Workspace() {
    return (
        <main className="flex min-h-0 flex-1">
            <SideBar names="line xline pline polygon rect arc circle cloud spline ellipse ellipseArc insertBlock makeBlock point hatch region mtext" />
            <section className="ml-[2px] flex min-w-0 flex-1 flex-col border-t-2 border-r-2 border-b border-l border-t-[#8c8c90] border-r-white border-b-white border-l-[#8c8c90]">
                <div className="flex min-h-0 flex-1">
                    <Canvas />
                    <div className="flex w-[18px] shrink-0 flex-col bg-linear-to-r from-[#e4eefc] to-[#f8fbff] px-px">
                        <ScrollButton dir="up" className="h-[17px]" />
                        <i className="grow-[485]" />
                        <ScrollButton dir="thumb-y" className="h-[17px]" />
                        <i className="grow-[34]" />
                        <ScrollButton dir="down" className="h-[17px]" />
                    </div>
                </div>
                <div className="flex justify-between pr-[18px]">
                    <SheetTabs />
                    <div className="flex w-[34%] bg-linear-to-b from-[#e4eefc] to-[#f8fbff]">
                        <i className="mt-px w-[5px] border border-[#a8a8ac] bg-white" />
                        <ScrollButton dir="left" className="h-4 w-[17px]" />
                        <i className="grow-[203]" />
                        <ScrollButton dir="thumb-x" className="h-4 w-[17px]" />
                        <i className="grow-[205]" />
                        <ScrollButton dir="right" className="h-4 w-[17px]" />
                    </div>
                </div>
            </section>
            <SideBar names="erase copyObj mirror offset array move rotate scale stretch trim extend breakPoint breakTwo chamfer fillet explode" />
        </main>
    )
}

const HISTORY = [
    '命令:',
    'DIMLINEAR',
    '指定第一条尺寸界线原点或 <选择对象>:d',
    '输入点无效。',
    '指定第一条尺寸界线原点或 <选择对象>:*取消*',
    '命令: d',
    'DIMSTYLE',
]

function CommandWindow() {
    return (
        <section className="mt-1 flex shrink-0 border-t-2 border-black bg-[#ebe9ed] pt-1">
            <div className="flex w-[17px] shrink-0 gap-px py-1 pl-1.5">
                <i className="w-1 border border-[#a0a0a4] border-t-white border-l-white" />
                <i className="w-1 border border-[#a0a0a4] border-t-white border-l-white" />
            </div>
            <div className="mr-2 min-w-0 flex-1 border-t border-l border-black bg-[#d9eedf] font-['Liberation_Mono','Noto_Sans_CJK_SC',monospace] text-[13px]">
                <div className="flex border-b border-[#9aa49c]">
                    <div className="flex-1 pb-[7px]">
                        {HISTORY.map((line, i) => (
                            <p key={i} className="h-[13px] leading-[13px]">
                                {line}
                            </p>
                        ))}
                    </div>
                    <div className="flex w-[17px] flex-col bg-linear-to-r from-[#e4eefc] to-[#f8fbff]">
                        <ScrollButton dir="up" className="h-[17px]" />
                        <i className="flex-1" />
                        <ScrollButton dir="thumb-y" className="h-[17px]" />
                        <ScrollButton dir="down" className="h-[17px]" />
                    </div>
                </div>
                <div className="flex h-4 items-center">
                    <label htmlFor="cmd" className="leading-4">
                        命令:
                    </label>
                    <input id="cmd" className="h-4 min-w-0 flex-1 px-1 outline-none" />
                    <div className="flex w-[66px] bg-[#eef4fe]">
                        <ScrollButton dir="left" className="h-[15px] w-[17px]" />
                        <ScrollButton dir="thumb-x" className="h-[15px] w-[17px]" />
                        <i className="flex-1" />
                        <ScrollButton dir="right" className="h-[15px] w-[17px]" />
                    </div>
                    <i className="h-4 w-[17px] bg-[#ebe9ed]" />
                </div>
            </div>
        </section>
    )
}

const MODES = [
    ['捕捉', false],
    ['栅格', false],
    ['正交', true],
    ['极轴', false],
    ['对象捕捉', true],
    ['对象追踪', true],
    ['线宽', false],
    ['模型', true],
]

function StatusBar() {
    return (
        <footer className="flex h-6 shrink-0 items-center gap-1 border-t border-[#9d9da1] bg-[#f0f2f6] pl-[5px] text-xs">
            <output className="h-[18px] w-[250px] border border-[#a4a4a8] pl-px font-['Liberation_Serif',serif] text-sm leading-[17px] text-[#a0a2a6]">
                604.6328, -49.4140, 0.0000
            </output>
            {MODES.map(([name, on]) => (
                <button
                    key={name}
                    aria-pressed={on}
                    className={clsx(
                        'h-[19px] border px-px leading-4',
                        on ? 'border-t-black border-r-white border-b-white border-l-black' : 'border-t-white border-r-[#9d9da1] border-b-[#9d9da1] border-l-white',
                    )}
                >
                    {name}
                </button>
            ))}
            <button aria-label="通信中心" className="ml-auto flex h-[18px] w-6 items-center justify-center border border-t-[#9d9da1] border-r-white border-b-white border-l-[#9d9da1] bg-[#e8e6f0]">
                <svg viewBox="0 0 16 16" className="h-4 w-4">
                    <path d="M2 4c0 6 5 9 10 7L4 2z" fill="#7890b8" stroke="#304878" />
                    <path d="m8 7 4-4M5 14h7l-3-4z" stroke="#304878" fill="#a8b8d4" />
                    <circle cx="12" cy="3" r="1.5" fill="#304878" />
                </svg>
            </button>
            <svg viewBox="0 0 8 5" className="mt-2 mr-[2px] h-[5px] w-2">
                <path d="M0 0h8L4 4.500z" />
            </svg>
        </footer>
    )
}

const Penguin = () => (
    <svg viewBox="0 0 16 16" className="h-4 w-4">
        <ellipse cx="8" cy="9" rx="6.5" ry="6" fill="#111" />
        <ellipse cx="8" cy="4.5" rx="4.5" ry="4.5" fill="#111" />
        <ellipse cx="8" cy="11" rx="4" ry="4" fill="#fff" />
        <circle cx="6.5" cy="3.5" r="1.3" fill="#fff" />
        <circle cx="9.5" cy="3.5" r="1.3" fill="#fff" />
        <path d="M5 5.500h6L8 7.500z" fill="#f0a010" />
        <path d="M3 8c3 2 7 2 10 0v2c-3 1-5 1-6 1v3H5v-3l-2-1z" fill="#e01818" />
        <path d="M3 14h4v2H3zM9 14h4v2H9z" fill="#f0a010" />
    </svg>
)

const Task = ({ icon, children }) => (
    <button className="flex h-[23px] w-[157px] items-center gap-[3px] rounded-[2px] border border-[#2c58a8] bg-linear-to-b from-[#6ca4e8] via-[#4480d4] to-[#3064bc] pl-2 text-left text-xs whitespace-nowrap text-white">
        {icon}
        {children}
    </button>
)

function TaskBar() {
    return (
        <div className="flex h-[30px] shrink-0 items-center border-t border-[#2450a0] bg-linear-to-b from-[#84bcf0] via-[#5094e0] via-45% to-[#2850a8] text-white">
            <button className="flex h-full w-[100px] items-center gap-2 rounded-r-lg border-r border-[#c8ecc0] bg-linear-to-b from-[#70c070] via-[#2c9430] via-40% to-[#20b020] pl-2.5 text-[19px] italic">
                <svg viewBox="0 0 20 18" className="h-[18px] w-5" aria-hidden="true">
                    <path d="M3 3c3-2 5-1 7 0L8.500 9c-2-1-4-2-7 0z" fill="#f06828" />
                    <path d="M11 3.500c3 1 5 1 8-1L17.500 9c-3 2-5 1-8 0z" fill="#88c838" />
                    <path d="M1.500 10c3-2 5-1 7 0L7 16c-2-1-4-2-7 0z" fill="#4888f0" />
                    <path d="M9.500 10.500c3 1 5 1 8-1L16 16c-3 2-5 1-8 0z" fill="#f8d038" />
                </svg>
                <span className="[text-shadow:1px_1px_1px_#145014]">开始</span>
            </button>
            <div className="flex w-[95px] items-center gap-[7px] pl-[11px]">
                <svg viewBox="0 0 16 16" className="h-4 w-4">
                    <circle cx="8" cy="8.5" r="5.2" fill="none" stroke="#8cd8ff" strokeWidth="3" />
                    <path d="M4 8.500h10" stroke="#c8f0ff" strokeWidth="2" />
                    <path d="M1 14C-1 9 9 0 15 2" fill="none" stroke="#f8c830" strokeWidth="1.4" />
                </svg>
                <svg viewBox="0 0 16 16" className="h-4 w-4">
                    <path d="M1 2h11l2 3v10H3z" fill="#e8f4fc" stroke="#5898d0" />
                    <circle cx="7.500" cy="8.5" r="3.500" fill="none" stroke="#2888c8" strokeWidth="1.8" />
                    <path d="M5 8.500h6" stroke="#2888c8" strokeWidth="1.4" />
                    <path d="m11 8 4-5 1 1-4 5z" fill="#d06030" />
                </svg>
                <Penguin />
            </div>
            <div className="flex gap-[3px]">
                <Task
                    icon={
                        <svg viewBox="0 0 16 16" className="h-4 w-4 shrink-0">
                            <circle cx="8" cy="8" r="7.5" fill="#88d038" stroke="#285818" />
                            <path d="M7 2c5-1 8 2 7 7-3 2-7 1-7-3z" fill="#3888d0" />
                            <path d="M3 10c2 0 3 2 3 4" fill="none" stroke="#3888d0" strokeWidth="2" />
                            <circle cx="6" cy="5" r="2" fill="#e8f0a0" />
                        </svg>
                    }
                >
                    基础综合练习05 - ...
                </Task>
                <Task icon={<AppLogo />}>AutoCAD 2004 - [Dra...</Task>
                <Task
                    icon={
                        <svg viewBox="0 0 16 16" className="h-4 w-4 shrink-0">
                            <path d="m1 4 7-3 7 7-6 7z" fill="#d8f0fc" stroke="#205888" strokeWidth=".8" />
                            <path d="m3 4 4 6V5l4 6V4" fill="none" stroke="#2880c8" strokeWidth="1.6" />
                        </svg>
                    }
                >
                    WPS 文字 - [文档 2 *]
                </Task>
            </div>
            <svg viewBox="0 0 16 13" className="ml-auto h-[13px] w-4">
                <path d="M5 3c1-3 2 1 4-1s3 0 4-1" fill="none" stroke="#000" />
                <rect x=".5" y="4.5" width="15" height="8" fill="#f4f4f0" stroke="#000" />
                <path d="M2 7h12M2 9h12M4 11h8" stroke="#000" strokeDasharray="1 1" />
            </svg>
            <button className="ml-[18px] text-xs">工具</button>
            <span className="-mt-3 ml-2 w-4 text-sm">»</span>
            <div className="ml-2 flex h-full items-center gap-[2px] bg-linear-to-b from-[#d4e6fc] via-[#a4c4f0] to-[#4c78c4] pr-[13px]">
                <button aria-label="展开" className="-ml-2 flex h-4 w-4 items-center justify-center rounded-full border border-[#e4f0fc] bg-[#6c94cc]">
                    <svg viewBox="0 0 8 8" className="h-2 w-2">
                        <path d="M5.500 1 2.500 4l3 3" fill="none" stroke="#fff" strokeWidth="1.6" />
                    </svg>
                </button>
                <svg viewBox="0 0 16 16" className="ml-px h-4 w-4">
                    <path d="M11 1 8 14l-8 0z" fill="#e01010" />
                    <path d="m10 8 6 6-5 0z" fill="#18c030" />
                </svg>
                <Penguin />
                <svg viewBox="0 0 16 16" className="h-4 w-4">
                    <circle cx="8" cy="8" r="7.5" fill="#30b4e4" />
                    <path d="M3 10C3 3 13 3 13 9c0 3-3 4-5 3 2-1 3-4 0-5" fill="none" stroke="#e8fcff" strokeWidth="1.8" />
                </svg>
                <svg viewBox="0 0 16 16" className="h-4 w-4">
                    <path d="M1 6c-1 6 4 10 10 8" fill="none" stroke="#1838a0" strokeWidth="2" />
                    <path d="M9 1c7-1 8 5 3 10" fill="none" stroke="#2858b8" strokeWidth="1.2" />
                    <circle cx="6" cy="6" r="4" fill="#f8b818" />
                </svg>
                <time className="pl-1.5 text-[11px] text-black">17:53</time>
            </div>
        </div>
    )
}

export default function App() {
    return (
        <div className="flex min-h-screen flex-col bg-[#ebe9ed] font-['Noto_Sans','Noto_Sans_CJK_SC',sans-serif] text-black select-none">
            <TitleBar />
            <MenuBar />
            <Toolbars />
            <Workspace />
            <CommandWindow />
            <StatusBar />
            <TaskBar />
        </div>
    )
}
